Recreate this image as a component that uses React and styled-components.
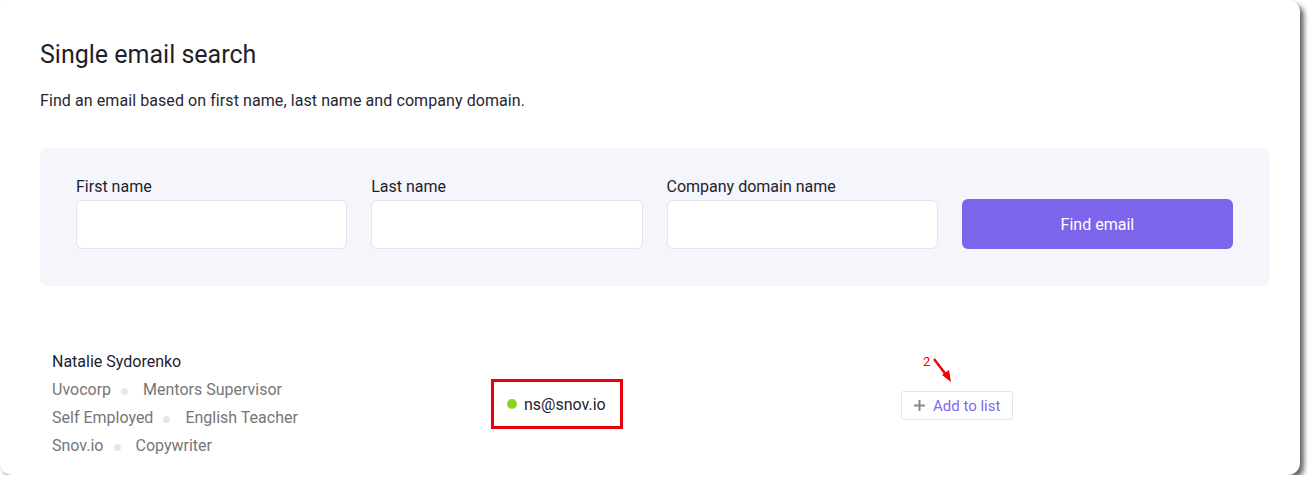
import React from "react";
import styled, { createGlobalStyle } from "styled-components";

const GlobalStyle = createGlobalStyle`
  body {
    margin: 0;
    background: #ffffff;
    font-family: Roboto, "Liberation Sans", sans-serif;
  }
`;

const Card = styled.div`
  width: 1300px;
  height: 475px;
  box-sizing: border-box;
  padding: 39px 30px 0 40px;
  background: #ffffff;
  border-radius: 12px;
  box-shadow: 4px 4px 5px rgba(0, 0, 0, 0.6);
`;

const Title = styled.h1`
  margin: 0;
  font-size: 25px;
  line-height: 32px;
  font-weight: 400;
  color: #1f1f2b;
`;

const Description = styled.p`
  margin: 20px 0 0;
  font-size: 16px;
  line-height: 20px;
  letter-spacing: 0.08px;
  color: #262633;
`;

const FormPanel = styled.div`
  margin-top: 37px;
  padding: 30px 37px 37px 36px;
  background: #f5f6fb;
  border-radius: 7px;
  display: grid;
  grid-template-columns: repeat(4, 1fr);
  gap: 24px;
  align-items: end;
`;

const Field = styled.label`
  display: flex;
  flex-direction: column;
  gap: 4px;
  font-size: 16px;
  line-height: 18px;
  color: #22222e;
`;

const Input = styled.input`
  height: 49px;
  box-sizing: border-box;
  border: 1px solid #e3e3ea;
  border-radius: 6px;
  background: #ffffff;
  outline: none;
`;

const FindButton = styled.button`
  height: 50px;
  border: none;
  border-radius: 6px;
  background: #7c64eb;
  color: #ffffff;
  font-family: Roboto, "Liberation Sans", sans-serif;
  font-size: 16px;
`;

const ResultRow = styled.div`
  margin-top: 62px;
  padding-left: 12px;
  display: grid;
  grid-template-columns: 439px 410px auto;
  align-items: center;
`;

const Person = styled.div`
  display: flex;
  flex-direction: column;
  font-size: 16px;
  line-height: 28px;
`;

const Name = styled.div`
  color: #22222e;
`;

const Job = styled.div`
  display: flex;
  align-items: center;
  color: #767676;
`;

const Dot = styled.span`
  width: 7px;
  height: 7px;
  border-radius: 50%;
  background: #e6e6e6;
  margin: 2px 15px 0 10px;
`;

const EmailBox = styled.div`
  width: 132px;
  height: 50px;
  box-sizing: border-box;
  border: 3px solid #e8000b;
  display: flex;
  align-items: center;
  gap: 7px;
  padding-left: 13px;
  font-size: 16px;
  color: #22222e;
`;

const StatusDot = styled.span`
  width: 10px;
  height: 10px;
  border-radius: 50%;
  background: ${(p) => p.color};
`;

const ActionCell = styled.div`
  position: relative;
  justify-self: start;
  padding-top: 3px;
`;

const AddButton = styled.button`
  height: 29px;
  padding: 0 12px 0 11px;
  display: flex;
  align-items: center;
  gap: 7px;
  border: 1px solid #e3e3e8;
  border-radius: 3px;
  background: #ffffff;
  color: #7f68ee;
  font-family: Roboto, "Liberation Sans", sans-serif;
  font-size: 15px;
`;

const Marker = styled.div`
  position: absolute;
  left: 22px;
  top: -34px;
  display: flex;
  align-items: flex-start;
  color: #f00000;
  font-size: 13px;
  line-height: 16px;
`;

const jobs = [
  ["Uvocorp", "Mentors Supervisor"],
  ["Self Employed", "English Teacher"],
  ["Snov.io", "Copywriter"],
];

export default function App() {
  return (
    <>
      <GlobalStyle />
      <Card>
        <Title>Single email search</Title>
        <Description>
          Find an email based on first name, last name and company domain.
        </Description>
        <FormPanel>
          <Field>
            First name
            <Input />
          </Field>
          <Field>
            Last name
            <Input />
          </Field>
          <Field>
            Company domain name
            <Input />
          </Field>
          <FindButton>Find email</FindButton>
        </FormPanel>
        <ResultRow>
          <Person>
            <Name>Natalie Sydorenko</Name>
            {jobs.map(([company, role]) => (
              <Job key={company}>
                {company}
                <Dot />
                {role}
              </Job>
            ))}
          </Person>
          <div>
            <EmailBox>
              <StatusDot color="#8ed21e" />
              ns@snov.io
            </EmailBox>
          </div>
          <ActionCell>
            <Marker>
              2
              <svg width="24" height="30" viewBox="0 0 24 30" style={{ marginLeft: 2, marginTop: 4 }}>
                <line x1="2" y1="1" x2="15" y2="18" stroke="#f00000" strokeWidth="2.4" />
                <polygon points="19,24 10,17 17,12" fill="#f00000" />
              </svg>
            </Marker>
            <AddButton>
              <svg width="13" height="13" viewBox="0 0 13 13">
                <path d="M6.5 1v11M1 6.5h11" stroke="#8a8a8a" strokeWidth="2" />
              </svg>
              Add to list
            </AddButton>
          </ActionCell>
        </ResultRow>
      </Card>
    </>
  );
}
